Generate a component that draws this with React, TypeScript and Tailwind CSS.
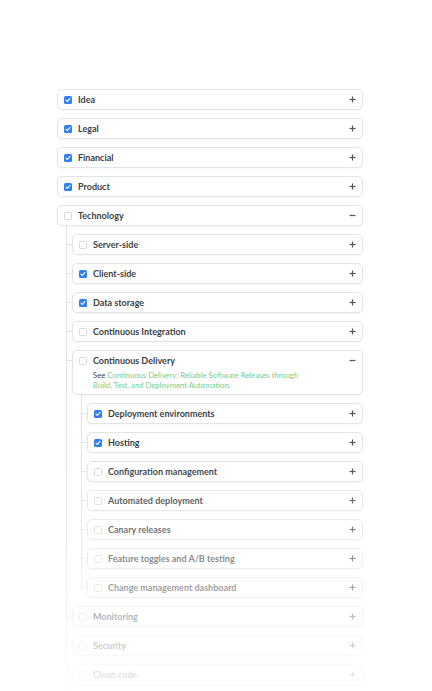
import React from "react";

type Node = {
    label: string;
    checked?: boolean;
    open?: boolean;
    description?: React.ReactNode;
    children?: Node[];
};

const tree: Node[] = [
    { label: "Idea", checked: true },
    { label: "Legal", checked: true },
    { label: "Financial", checked: true },
    { label: "Product", checked: true },
    {
        label: "Technology",
        open: true,
        children: [
            { label: "Server-side" },
            { label: "Client-side", checked: true },
            { label: "Data storage", checked: true },
            { label: "Continuous Integration" },
            {
                label: "Continuous Delivery",
                open: true,
                description: (
                    <>
                        See{" "}
                        <span className="text-[#72cf90]">
                            Continuous Delivery: Reliable Software Releases through Build, Test, and Deployment Automation.
                        </span>
                    </>
                ),
                children: [
                    { label: "Deployment environments", checked: true },
                    { label: "Hosting", checked: true },
                    { label: "Configuration management" },
                    { label: "Automated deployment" },
                    { label: "Canary releases" },
                    { label: "Feature toggles and A/B testing" },
                    { label: "Change management dashboard" },
                ],
            },
            { label: "Monitoring" },
            { label: "Security" },
            { label: "Clean code" },
            { label: "Documentation" },
        ],
    },
];

function Checkbox({ checked }: { checked?: boolean }) {
    if (checked) {
        return (
            <span className="flex h-[8px] w-[8px] shrink-0 items-center justify-center rounded-[1.5px] bg-[#2f80f5]">
                <svg width="6" height="6" viewBox="0 0 6 6" fill="none">
                    <path d="M1 3.2 L2.4 4.5 L5 1.4" stroke="white" strokeWidth="1.1" strokeLinecap="round" strokeLinejoin="round" />
                </svg>
            </span>
        );
    }
    return <span className="h-[8px] w-[8px] shrink-0 rounded-[1.5px] border border-[#d9d9d9] bg-white" />;
}

function Toggle({ open }: { open?: boolean }) {
    return (
        <svg width="7" height="7" viewBox="0 0 7 7" className="shrink-0">
            <path d="M0.5 3.5 H6.5" stroke="#555" strokeWidth="1.2" />
            {!open && <path d="M3.5 0.5 V6.5" stroke="#555" strokeWidth="1.2" />}
        </svg>
    );
}

function Item({ node }: { node: Node }) {
    return (
        <div>
            <div className="rounded-[5px] border border-[#e4e4e4] bg-white shadow-[0_1px_2px_rgba(0,0,0,0.04)]">
                <div className="flex h-[19px] items-center gap-[6px] pl-[6px] pr-[6px]">
                    <Checkbox checked={node.checked} />
                    <span className="flex-1 whitespace-nowrap text-[9px] font-bold text-[#3b3f45]">{node.label}</span>
                    <Toggle open={node.open} />
                </div>
                {node.description && (
                    <p className="pb-[4px] pl-[20px] pr-[60px] text-[7.7px] leading-[10px] text-[#444]">{node.description}</p>
                )}
            </div>
            {node.open && node.children && <Children nodes={node.children} />}
        </div>
    );
}

function Children({ nodes }: { nodes: Node[] }) {
    return (
        <div className="mt-[8px] flex flex-col gap-[8px]">
            {nodes.map((child, i) => {
                const last = i === nodes.length - 1;
                return (
                    <div key={child.label} className="relative pl-[15px]">
                        {last ? (
                            <span className="absolute left-[9px] top-[-8px] h-[19px] w-[6px] rounded-bl-[4px] border-b border-l border-[#e2e2e2]" />
                        ) : (
                            <>
                                <span className="absolute bottom-0 left-[9px] top-[-8px] border-l border-[#e2e2e2]" />
                                <span className="absolute left-[9px] top-[10px] w-[6px] border-t border-[#e2e2e2]" />
                            </>
                        )}
                        <Item node={child} />
                    </div>
                );
            })}
        </div>
    );
}

export default function App() {
    return (
        <div className="relative h-[691px] w-[432px] overflow-hidden bg-white font-['Lato',sans-serif]">
            <div className="ml-[57px] mt-[89px] flex w-[306px] flex-col gap-[8px]">
                {tree.map((node) => (
                    <Item key={node.label} node={node} />
                ))}
            </div>
            {/* fade out toward the bottom */}
            <div className="pointer-events-none absolute bottom-0 left-0 right-0 top-[460px] bg-gradient-to-b from-white/0 to-white/90" />
        </div>
    );
}
